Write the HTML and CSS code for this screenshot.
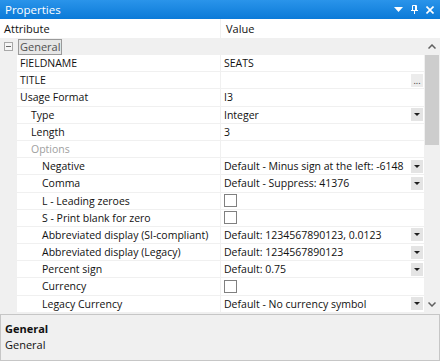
FILE: index.html
```html
<!DOCTYPE html>
<html lang="en">
<head>
    <meta charset="UTF-8">
    <title>Properties</title>
    <link rel="stylesheet" href="styles.css">
</head>
<body>
    <div class="panel">
        <div class="titlebar">
            <span class="title">Properties</span>
            <span class="title-icons">
                <svg width="9" height="6" viewBox="0 0 9 6"><path d="M0 0h9L4.5 5z" fill="#fff"/></svg>
                <svg width="7" height="9" viewBox="0 0 7 9"><path d="M1.5 0.5h4v5h-4z M0 5.5h7 M3.5 5.5v3.5" stroke="#fff" fill="none"/><path d="M4 1h1v4h-1z" fill="#fff"/></svg>
                <svg width="8" height="8" viewBox="0 0 8 8"><path d="M0.5 0.5l7 7M7.5 0.5l-7 7" stroke="#fff" stroke-width="1.6"/></svg>
            </span>
        </div>

        <div class="grid-header">
            <div class="col-attr">Attribute</div>
            <div class="col-value">Value</div>
        </div>

        <div class="grid-body">
            <div class="rows">
                <div class="group-row">
                    <span class="toggle"></span>
                    <span class="group-label">General</span>
                </div>

                <div class="row">
                    <div class="attr">FIELDNAME</div>
                    <div class="value">SEATS</div>
                </div>
                <div class="row">
                    <div class="attr">TITLE</div>
                    <div class="value"><span class="text"></span><span class="btn ellipsis">...</span></div>
                </div>
                <div class="row">
                    <div class="attr">Usage Format</div>
                    <div class="value">I3</div>
                </div>
                <div class="row">
                    <div class="attr lvl1">Type</div>
                    <div class="value"><span class="text">Integer</span><span class="btn drop"></span></div>
                </div>
                <div class="row">
                    <div class="attr lvl1">Length</div>
                    <div class="value">3</div>
                </div>
                <div class="row">
                    <div class="attr lvl1 muted">Options</div>
                    <div class="value"></div>
                </div>
                <div class="row">
                    <div class="attr lvl2">Negative</div>
                    <div class="value"><span class="text">Default - Minus sign at the left: -6148</span><span class="btn drop"></span></div>
                </div>
                <div class="row">
                    <div class="attr lvl2">Comma</div>
                    <div class="value"><span class="text">Default - Suppress: 41376</span><span class="btn drop"></span></div>
                </div>
                <div class="row">
                    <div class="attr lvl2">L - Leading zeroes</div>
                    <div class="value"><span class="check"></span></div>
                </div>
                <div class="row">
                    <div class="attr lvl2">S - Print blank for zero</div>
                    <div class="value"><span class="check"></span></div>
                </div>
                <div class="row">
                    <div class="attr lvl2">Abbreviated display (SI-compliant)</div>
                    <div class="value"><span class="text">Default: 1234567890123, 0.0123</span><span class="btn drop"></span></div>
                </div>
                <div class="row">
                    <div class="attr lvl2">Abbreviated display (Legacy)</div>
                    <div class="value"><span class="text">Default: 1234567890123</span><span class="btn drop"></span></div>
                </div>
                <div class="row">
                    <div class="attr lvl2">Percent sign</div>
                    <div class="value"><span class="text">Default: 0.75</span><span class="btn drop"></span></div>
                </div>
                <div class="row">
                    <div class="attr lvl2">Currency</div>
                    <div class="value"><span class="check"></span></div>
                </div>
                <div class="row">
                    <div class="attr lvl2">Legacy Currency</div>
                    <div class="value"><span class="text">Default - No currency symbol</span><span class="btn drop"></span></div>
                </div>
            </div>

            <div class="scrollbar">
                <div class="arrow up"><svg width="8" height="5" viewBox="0 0 8 5"><path d="M0.5 4.5L4 1l3.5 3.5" stroke="#606060" stroke-width="1.5" fill="none"/></svg></div>
                <div class="track"><div class="thumb"></div></div>
                <div class="arrow down"><svg width="8" height="5" viewBox="0 0 8 5"><path d="M0.5 0.5L4 4l3.5-3.5" stroke="#606060" stroke-width="1.5" fill="none"/></svg></div>
            </div>
        </div>

        <div class="desc">
            <div class="desc-title">General</div>
            <div class="desc-text">General</div>
        </div>
    </div>
</body>
</html>
```

FILE: styles.css
```css
body {
    margin: 0;
    font-family: "Open Sans", "Noto Sans", sans-serif;
    font-size: 10.5px;
    color: #111;
    background-color: #f0f0f0;
}
.panel {
    width: 440px;
    height: 361px;
    display: flex;
    flex-direction: column;
    overflow: hidden;
}
.titlebar {
    height: 19px;
    background: linear-gradient(#2a94ea, #0b7ad8);
    color: white;
    display: flex;
    align-items: center;
    justify-content: space-between;
    padding: 0 6px 0 5px;
    flex-shrink: 0;
}
.title {
    font-size: 11.5px;
}
.title-icons {
    display: flex;
    align-items: center;
    gap: 8px;
}
.grid-header {
    height: 19px;
    background-color: white;
    display: flex;
    align-items: center;
    flex-shrink: 0;
    font-size: 11px;
}
.grid-header .col-attr {
    width: 216px;
    padding-left: 4px;
    height: 100%;
    line-height: 19px;
    border-right: 1px solid #f0f0f0;
}
.grid-header .col-value {
    padding-left: 5px;
}
.grid-body {
    height: 275px;
    display: flex;
    flex-shrink: 0;
}
.rows {
    flex: 1;
    overflow: hidden;
}
.group-row {
    height: 17px;
    background-color: #f0f0f0;
    display: flex;
    align-items: center;
}
.toggle {
    width: 7px;
    height: 7px;
    border: 1px solid #a8a8a8;
    margin: 0 5px 0 4px;
    position: relative;
    background-color: #f6f6f6;
}
.toggle::after {
    content: "";
    position: absolute;
    left: 1px;
    top: 3px;
    width: 5px;
    height: 1px;
    background-color: #6a6a6a;
}
.group-label {
    border: 1px solid #9a9a9a;
    background-color: #e6e6e6;
    color: #505050;
    padding: 0 1px;
    line-height: 14px;
    font-size: 11px;
}
.row {
    height: 16.2px;
    display: flex;
    border-bottom: 1px solid #f0f0f0;
    margin-left: 17px;
    background-color: white;
}
.attr {
    width: 200px;
    flex-shrink: 0;
    padding-left: 3px;
    line-height: 16px;
    white-space: nowrap;
    overflow: hidden;
    border-right: 1px solid #f0f0f0;
}
.lvl1 {
    width: 189px;
    padding-left: 14px;
}
.lvl2 {
    width: 178px;
    padding-left: 25px;
}
.muted {
    color: #a0a0a0;
}
.value {
    flex: 1;
    min-width: 0;
    display: flex;
    align-items: center;
    padding-left: 3px;
    line-height: 16px;
    white-space: nowrap;
}
.value .text {
    flex: 1;
    overflow: hidden;
}
.btn {
    width: 12px;
    height: 13px;
    flex-shrink: 0;
    margin-right: 1px;
    background-color: #e4e4e4;
    display: flex;
    align-items: center;
    justify-content: center;
}
.ellipsis {
    font-size: 9px;
    line-height: 13px;
    color: #303030;
    background-color: #ececec;
}
.drop::after {
    content: "";
    border-left: 3px solid transparent;
    border-right: 3px solid transparent;
    border-top: 3px solid #202020;
}
.check {
    width: 11px;
    height: 11px;
    border: 1px solid #808080;
    background-color: white;
}
.scrollbar {
    width: 16px;
    background-color: #f0f0f0;
    display: flex;
    flex-direction: column;
}
.arrow {
    height: 17px;
    display: flex;
    align-items: center;
    justify-content: center;
}
.track {
    flex: 1;
    padding: 0 1px;
}
.thumb {
    height: 90px;
    background-color: #cdcdcd;
}
.desc {
    flex: 1;
    margin-top: 1px;
    border: 1px solid #c6c6c6;
    background-color: #f0f0f0;
    padding: 6px 4px;
}
.desc-title {
    font-weight: bold;
    line-height: 16px;
    font-size: 11px;
}
.desc-text {
    line-height: 16px;
    font-size: 11px;
}
```
